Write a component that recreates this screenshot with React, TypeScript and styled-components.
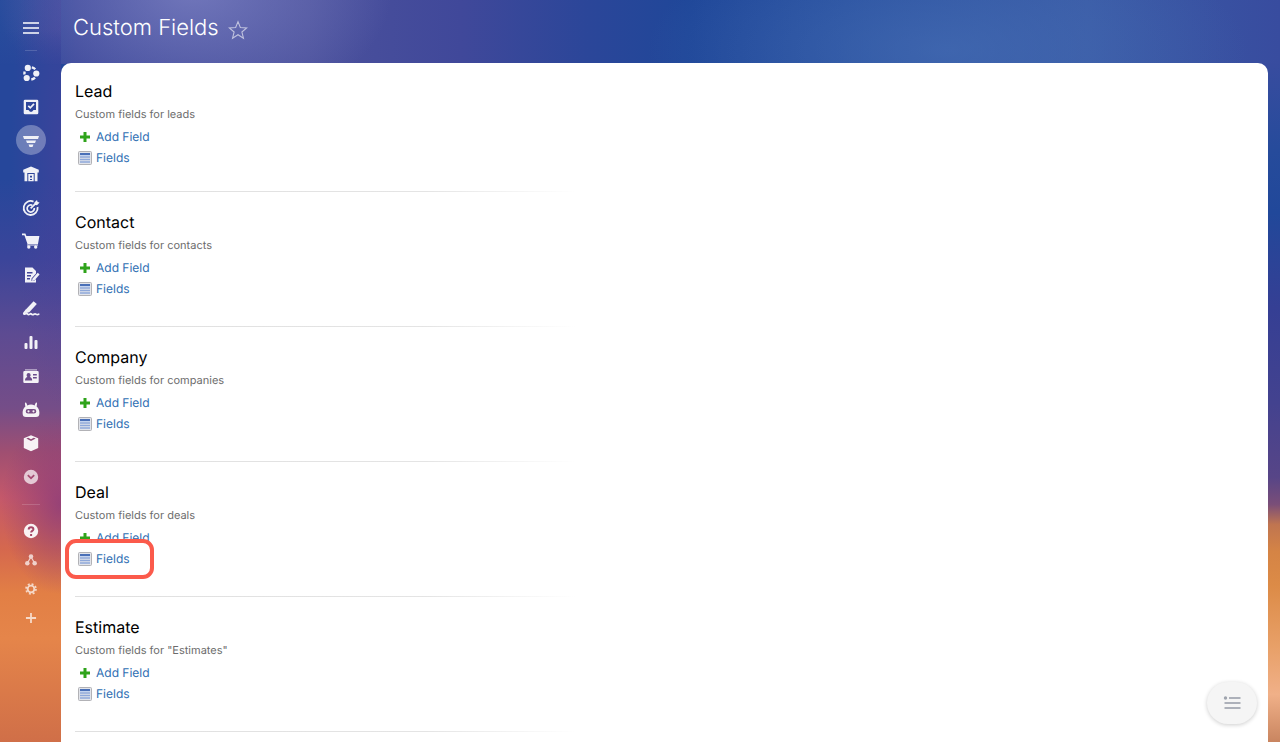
import React from 'react';
import styled, { createGlobalStyle } from 'styled-components';

const GlobalStyle = createGlobalStyle`
  *, *::before, *::after { box-sizing: border-box; }
  body { margin: 0; font-family: Inter, "Liberation Sans", sans-serif; text-rendering: geometricPrecision; background: #24479a; }
  h1, h2, p, ul { margin: 0; padding: 0; }
  button { font: inherit; border: 0; padding: 0; background: none; color: inherit; cursor: pointer; }
  a { text-decoration: none; color: inherit; }
`;

const Page = styled.div`
  position: relative;
  display: flex;
  height: 100vh;
  overflow: hidden;
  background:
    radial-gradient(ellipse 200px 130px at 15% -10px, rgba(132, 136, 200, 0.7), transparent),
    radial-gradient(ellipse 300px 120px at 74% 50px, rgba(72, 112, 182, 0.6), transparent),
    linear-gradient(90deg, #274b9c 0, #3c489a 6%, #4b519c 24%, #40489a 36%, #2b4699 46%, #1f4799 54%, #28509f 66%, #3a5ba6 85%, #384c9f 100%);
  background-size: 100% 64px, 100% 64px, 100% 64px;
  background-repeat: no-repeat;
`;

const Sidebar = styled.nav`
  display: flex;
  flex-direction: column;
  align-items: center;
  flex: none;
  width: 61px;
  padding-top: 12px;
  color: #fff;
  background:
    radial-gradient(ellipse 50px 260px at 100% 20%, rgba(80, 64, 155, 0.5), transparent),
    radial-gradient(ellipse 60px 90px at 100% 68%, rgba(130, 55, 125, 0.7), transparent),
    linear-gradient(180deg, transparent 0, transparent 4%, #26479b 9%, #26479b 24%, #3b459a 35%, #5d4b92 45%, #754d88 55%, #a04f71 61%, #c4586a 67%, #d5684e 74%, #e27f45 80%, #e5854a 86%, #d06f48 100%);
`;

const NavGroup = styled.div`
  display: flex;
  flex-direction: column;
  justify-content: space-between;
  flex: none;
  height: 434px;
`;

const NavItem = styled.a<{ $active?: boolean; $dim?: boolean; $small?: boolean }>`
  display: grid;
  place-items: center;
  flex: none;
  width: 30px;
  height: ${p => (p.$small ? 29 : 30)}px;
  border-radius: 50%;
  background: ${p => (p.$active ? 'rgba(255,255,255,0.33)' : 'transparent')};
  opacity: ${p => (p.$dim ? 0.7 : 0.93)};
  svg { display: block; }
`;

const MenuButton = styled.button`
  display: grid;
  place-items: center;
  width: 32px;
  height: 32px;
  opacity: 0.75;
`;

const Rule = styled.span<{ $wide?: boolean }>`
  flex: none;
  width: ${p => (p.$wide ? 18 : 12)}px;
  height: 1px;
  margin: ${p => (p.$wide ? '12px 0 11px' : '6px 0 7px')};
  background: rgba(255, 255, 255, 0.16);
`;

const Main = styled.div`
  display: flex;
  flex-direction: column;
  flex: 1;
  min-width: 0;
  padding-right: 12px;
`;

const Edge = styled.div`
  position: absolute;
  top: 63px;
  right: 0;
  bottom: 0;
  width: 24px;
  background: linear-gradient(180deg, #384c9f 0, #264b9b 13%, #21489a 22%, #353f94 36%, #43428f 50%, #574587 61%, #7a4e78 65%, #c07550 68%, #d58445 72%, #dc8b47 77%, #e8a068 86%, #f0b088 93%, #c98560 100%);
`;

const Header = styled.header`
  display: flex;
  align-items: center;
  gap: 9px;
  height: 63px;
  padding: 0 12px 7px;
  color: #fff;
`;

const Title = styled.h1`
  font-size: 22px;
  line-height: 32px;
  font-weight: 300;
`;

const StarButton = styled.button`
  display: grid;
  place-items: center;
  padding-top: 4px;
  opacity: 0.6;
`;

const Panel = styled.main`
  position: relative;
  flex: 1;
  min-height: 0;
  overflow: hidden;
  padding: 0 14px;
  border-radius: 10px 10px 0 0;
  background: #fff;
`;

const Section = styled.section<{ $first?: boolean }>`
  width: 500px;
  max-width: 100%;
  padding: ${p => (p.$first ? '16px 0 23px' : '18px 0 27px')};
  border-bottom: 1px solid;
  border-image: linear-gradient(90deg, #e0e0e0 0, #e4e4e4 70%, transparent 100%) 1;
`;

const SectionTitle = styled.h2`
  font-size: 16px;
  line-height: 24px;
  font-weight: 400;
  color: #000;
`;

const Description = styled.p`
  font-size: 11px;
  line-height: 23px;
  color: #6c6c6c;
`;

const LinkList = styled.ul`
  display: flex;
  flex-direction: column;
  align-items: flex-start;
  list-style: none;
`;

const LinkItem = styled.li`
  position: relative;
  padding-left: 3px;
`;

const FieldLink = styled.a`
  display: flex;
  align-items: center;
  gap: 4px;
  font-size: 12px;
  line-height: 21px;
  color: #2f6fb3;
  svg { display: block; }
`;

const Highlight = styled.span`
  position: absolute;
  inset: -9px -24px -10px -10px;
  border: 4px solid #fb5a4b;
  border-radius: 11px;
  background: #fff;
`;

const Above = styled.span`
  position: relative;
  display: block;
`;

const FloatingButton = styled.button`
  position: absolute;
  right: 11px;
  bottom: 18px;
  display: grid;
  place-items: center;
  width: 50px;
  height: 42px;
  border-radius: 21px;
  background: #f5f5f5;
  box-shadow: 0 1px 4px rgba(0, 0, 0, 0.2);
`;

const PlusIcon = () => (
  <svg width="14" height="14" viewBox="0 0 14 14" aria-hidden="true">
    <path d="M5.500 2h3v3.500H12v3H8.500V12h-3V8.500H2v-3h3.500z" fill="#2fa31b" />
  </svg>
);

const GridIcon = () => (
  <svg width="14" height="14" viewBox="0 0 14 14" aria-hidden="true">
    <rect x=".5" y=".5" width="13" height="13" rx="1" fill="#e2e4ea" stroke="#b2b2b6" />
    <rect x="2" y="2" width="10" height="2" fill="#4a70b8" />
    <path d="M2 6h10M2 8.500h10M2 11h10" stroke="#8ea8da" strokeWidth="1.500" />
    <path d="M2 4.500h10" stroke="#c3d3ef" />
  </svg>
);

const Svg = ({ children, size = 18 }: { children: React.ReactNode; size?: number }) => (
  <svg width={size} height={size} viewBox="0 0 18 18" fill="currentColor" aria-hidden="true">{children}</svg>
);

const line = { fill: 'none', stroke: 'currentColor' } as const;

type Item = { label: string; active?: boolean; dim?: boolean; icon: React.ReactNode };

const items: Item[] = [
  {
    label: 'Collaboration',
    icon: <Svg><path d="M9.800 3.300a6.500 6.500 0 0 1 3.400 2M13 13.600a6.500 6.500 0 0 1-3.700 1.900M2.700 7.500a6.500 6.500 0 0 0-.2 3" {...line} strokeWidth="2.400" /><circle cx="5.800" cy="3.900" r="3.100" /><circle cx="14.300" cy="9.500" r="3.100" /><circle cx="4.700" cy="14" r="3.100" /></Svg>,
  },
  {
    label: 'Tasks',
    icon: <Svg><path fillRule="evenodd" d="M3 1.700h12a1.300 1.300 0 0 1 1.300 1.300v12a1.300 1.300 0 0 1-1.300 1.300H3A1.300 1.300 0 0 1 1.700 15V3A1.300 1.300 0 0 1 3 1.700zM4 4v8h2.500l1.500 1.700h2L11.500 12H14V4z" /><path d="M6.300 7.800l2 2 3.700-4" {...line} strokeWidth="1.700" /></Svg>,
  },
  {
    label: 'CRM', active: true,
    icon: <Svg><path d="M1 5h16l-1 3H2zM4 9.500h10l-1 2.500H5zM6.500 13.500h5l-1 2.500h-3z" /></Svg>,
  },
  {
    label: 'Inventory',
    icon: <Svg><path d="M9 1.500l7.800 3.200v2.800h-1.300v8.800h-2.800V8H5.300v8.300H2.500V7.500H1.200V4.700z" /><path fillRule="evenodd" d="M6.300 9h5.400v7.300H6.300zM8 10.700v1.800h2v-1.800zM8 14v1h2v-1z" /></Svg>,
  },
  {
    label: 'Marketing',
    icon: <Svg><path d="M11.500 2.600A7 7 0 1 0 15.600 8" {...line} strokeWidth="1.800" /><path d="M10.300 6.200A3.600 3.600 0 1 0 12.300 9" {...line} strokeWidth="1.700" /><path d="M8.600 9.400l5.400-5.200" {...line} strokeWidth="1.800" /><path d="M12.400 3.600L15 1l.6 1.900 2 .6L15 6.200l-2.300-.4z" /></Svg>,
  },
  {
    label: 'Sites and stores',
    icon: <Svg><path d="M0 1.500h3.400l1 2.500h13l-1.400 8H5.500L2.400 3.200H0zM5 12.500h11v1H5z" /><circle cx="6.800" cy="15" r="1.700" /><circle cx="13.700" cy="15" r="1.700" /></Svg>,
  },
  {
    label: 'Documents',
    icon: <Svg><path fillRule="evenodd" d="M3 1.500h7.500L14 5v2.500l-4.500 5V15H12l2-2v3.500H3zM5 6v1.400h5.500V6zM5 9v1.400h4V9zM5 12v1.400h3V12z" /><path d="M10.400 12.800l5.300-6 1.900 1.600-5.300 6.100-2.300.6z" /></Svg>,
  },
  {
    label: 'Signatures',
    icon: <Svg><path d="M11.600 1.200l3.200 2.800-7.500 8.200-4 1 .8-4z" /><path d="M4 10.500l-2 2.600c-.5.800.1 1.200 1 .8 1.200-.6 2-.6 2.600.1.600.8 1.300.8 2.200.1.700-.6 1.300-.4 1.900.1.800.6 1.500.5 2.200 0 .8-.5 1.500-.5 2.200 0 .8.500 1.700.4 2.600 0" {...line} strokeWidth="1.800" strokeLinecap="round" /></Svg>,
  },
  {
    label: 'Analytics',
    icon: <Svg><rect x="2.500" y="10" width="3" height="6" rx="1" /><rect x="7.500" y="3" width="3" height="13" rx="1" /><rect x="12.500" y="7" width="3" height="9" rx="1" /></Svg>,
  },
  {
    label: 'Employees',
    icon: <Svg><path d="M3 2.300h12v1.200H3z" opacity=".7" /><path fillRule="evenodd" d="M2.500 4h13a1.200 1.200 0 0 1 1.200 1.200v9.600a1.200 1.200 0 0 1-1.200 1.200h-13a1.200 1.200 0 0 1-1.200-1.200V5.200A1.200 1.200 0 0 1 2.500 4zM6.600 6a2 2 0 0 0-2 2c0 1 .4 1.600 1 2.100-1.400.4-2.600 1-2.600 3.400h7.200c0-2.400-1.200-3-2.600-3.400.6-.5 1-1.100 1-2.100a2 2 0 0 0-2-2zM11 7v1.500h3.800V7zM11 10v1.500h3.800V10z" /></Svg>,
  },
  {
    label: 'Automation',
    icon: <Svg><path fillRule="evenodd" d="M3.600 1.500c.9 0 1.200 1.400 1.700 2.900a9.500 9.500 0 0 1 7.400 0c.5-1.500.8-2.900 1.700-2.900 1.100 0 .5 2.500.2 4 1.900 1.500 2.800 3.500 2.800 6.500 0 3-1.200 4-3.400 4H4c-2.200 0-3.400-1-3.400-4 0-3 .9-5 2.800-6.500-.3-1.500-.9-4 .2-4zM6 8a2.300 2.300 0 0 0 0 4.600h6A2.300 2.300 0 0 0 12 8z" /><circle cx="6.500" cy="10.300" r="1.100" /><circle cx="11.500" cy="10.300" r="1.100" /></Svg>,
  },
  {
    label: 'Market',
    icon: <Svg><path fillRule="evenodd" d="M9 1.200l7.200 3v9.700L9 17.200l-7.200-3.300V4.200zM4.300 4.600L9 6.900l4.700-2.300-1.900-.8L9 5.200 6.200 3.800z" /></Svg>,
  },
  {
    label: 'More', dim: true,
    icon: <Svg><path fillRule="evenodd" d="M9 1.800a7.200 7.200 0 1 0 0 14.400A7.200 7.200 0 0 0 9 1.800zM5.200 7.700l1.200-1.200L9 9.100l2.600-2.600 1.200 1.200L9 11.500z" /></Svg>,
  },
];

const tools: Item[] = [
  {
    label: 'Help',
    icon: <Svg><circle cx="9" cy="9" r="7.200" /><path d="M6.700 7.400c0-3 4.700-2.800 4.700-.2 0 1.700-2.300 1.700-2.300 3.400M9.100 11.900v2" fill="none" stroke="#a64768" strokeWidth="2" /></Svg>,
  },
  {
    label: 'Sitemap', dim: true,
    icon: <Svg size={14}><circle cx="9" cy="4.500" r="2.900" /><circle cx="4.300" cy="13.300" r="2.900" /><circle cx="13.700" cy="13.300" r="2.900" /><path d="M4.300 13L9 5l4.700 8" {...line} strokeWidth="1.500" /></Svg>,
  },
  {
    label: 'Settings', dim: true,
    icon: <Svg size={14}><circle cx="9" cy="9" r="4.300" {...line} strokeWidth="2.400" /><circle cx="9" cy="9" r="6.400" {...line} strokeWidth="2.200" strokeDasharray="2.513 2.513" /></Svg>,
  },
  {
    label: 'Add', dim: true,
    icon: <Svg size={14}><path d="M9 2.500v13M2.500 9h13" {...line} strokeWidth="2.300" /></Svg>,
  },
];

const sections = [
  { title: 'Lead', text: 'Custom fields for leads' },
  { title: 'Contact', text: 'Custom fields for contacts' },
  { title: 'Company', text: 'Custom fields for companies' },
  { title: 'Deal', text: 'Custom fields for deals', marked: true },
  { title: 'Estimate', text: 'Custom fields for "Estimates"' },
];

export default function App() {
  return (
    <>
      <GlobalStyle />
      <Page>
        <Edge />
        <Sidebar aria-label="Main">
          <MenuButton aria-label="Menu">
            <Svg><path d="M1 4h16M1 9h16M1 14h16" {...line} strokeWidth="2" /></Svg>
          </MenuButton>
          <Rule />
          <NavGroup>
            {items.map(i => (
              <NavItem key={i.label} href="#" aria-label={i.label} $active={i.active} $dim={i.dim}>{i.icon}</NavItem>
            ))}
          </NavGroup>
          <Rule $wide />
          {tools.map(i => (
            <NavItem key={i.label} href="#" aria-label={i.label} $dim={i.dim} $small>{i.icon}</NavItem>
          ))}
        </Sidebar>
        <Main>
          <Header>
            <Title>Custom Fields</Title>
            <StarButton aria-label="Add to favorites">
              <Svg size={20}><path d="M9 1.500l2.100 5.300 5.700.4-4.300 3.600 1.400 5.600L9 13.300l-4.900 3.100 1.400-5.600L1.200 7.200l5.700-.4z" {...line} /></Svg>
            </StarButton>
          </Header>
          <Panel>
            {sections.map((s, n) => (
              <Section key={s.title} $first={n === 0}>
                <SectionTitle>{s.title}</SectionTitle>
                <Description>{s.text}</Description>
                <LinkList>
                  <LinkItem><FieldLink href="#"><PlusIcon />Add Field</FieldLink></LinkItem>
                  <LinkItem>
                    {s.marked && <Highlight />}
                    <Above><FieldLink href="#"><GridIcon />Fields</FieldLink></Above>
                  </LinkItem>
                </LinkList>
              </Section>
            ))}
            <FloatingButton aria-label="Show list">
              <svg width="18" height="14" viewBox="0 0 18 14" aria-hidden="true">
                <circle cx="2.500" cy="2" r="1.700" fill="#9fa4ae" />
                <path d="M6 2h11.500M1.500 7h16M1.500 12h16" stroke="#adb1ba" strokeWidth="2" />
              </svg>
            </FloatingButton>
          </Panel>
        </Main>
      </Page>
    </>
  );
}
